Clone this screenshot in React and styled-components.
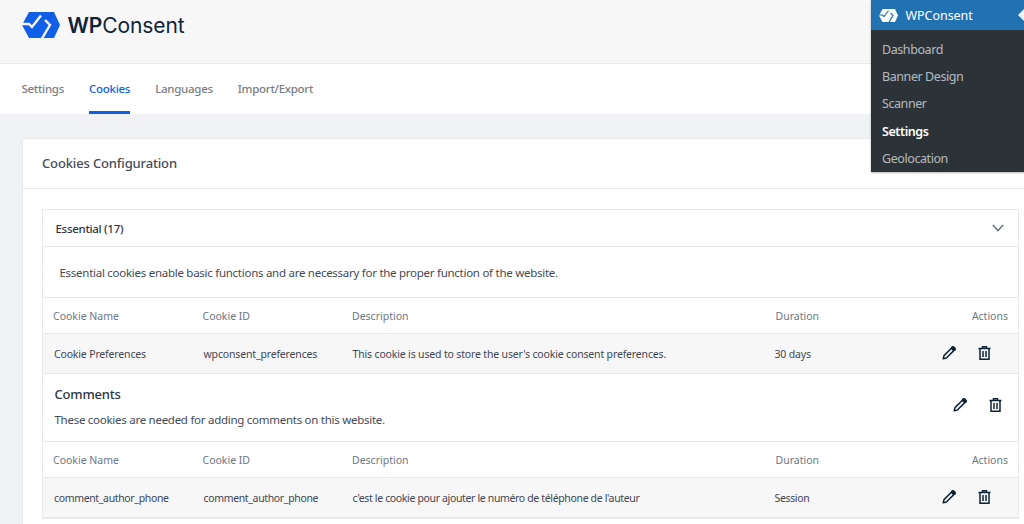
import styled, { createGlobalStyle } from 'styled-components';

const GlobalStyle = createGlobalStyle`
    html, body {
        margin: 0;
        padding: 0;
        background: #f0f2f5;
    }
    body {
        font-family: "Noto Sans", "Open Sans", sans-serif;
        color: #393f4c;
    }
    * {
        box-sizing: border-box;
    }
`;

const sections = [
    {
        rows: [
            ['Cookie Preferences', 'wpconsent_preferences', "This cookie is used to store the user's cookie consent preferences.", '30 days'],
        ],
    },
    {
        title: 'Comments',
        text: 'These cookies are needed for adding comments on this website.',
        tight: true,
        rows: [
            ['comment_author_phone', 'comment_author_phone', "c'est le cookie pour ajouter le numéro de téléphone de l'auteur", 'Session'],
        ],
    },
];

const LogoMark = ({ width = 38, color = '#0f5fe8', cut = '#f7f7f8', seam = '#0b46b4' }) => (
    <svg width={width} height={(width * 26) / 38} viewBox="0 0 38 26">
        <path d="M7 0 H32 L38 13 L32 26 H7 L0 13 Z" fill={color} />
        <g fill="none" stroke={cut} strokeWidth="2.4">
            <path d="M-1 12 H7 L10 15 L19 3.5" />
            <path d="M23 8 L28 13 L19.7 27" />
        </g>
        <path d="M32 0 L25.5 7" fill="none" stroke={seam} strokeWidth="0.7" />
    </svg>
);

const PencilIcon = () => (
    <svg width="14" height="14" viewBox="0 0 14 14" fill="none" stroke="#0f2438" strokeWidth="1.5" strokeLinejoin="round">
        <path d="M1.2 12.8 L2 9.6 L9.6 2 L12 4.4 L4.4 12 Z" />
        <path d="M10 1 L11.2 0.6 L13.4 2.8 L13 4 L11.6 4.4 L9.6 2.4 Z" fill="#0f2438" />
    </svg>
);

const TrashIcon = () => (
    <svg width="13" height="14" viewBox="0 0 13 14" fill="none" stroke="#0f2438" strokeWidth="1.5">
        <path d="M0.5 2.5 H12.5" />
        <path d="M4.5 2.5 V0.8 H8.5 V2.5" />
        <path d="M2 2.5 V13.2 H11 V2.5" />
        <path d="M5 5 V11 M8 5 V11" />
    </svg>
);

const Chevron = () => (
    <svg width="12" height="8" viewBox="0 0 12 8" fill="none" stroke="#6b7280" strokeWidth="1.4">
        <path d="M0.8 1 L6 6.6 L11.2 1" />
    </svg>
);

const Actions = ({ inset }) => (
    <ActionGroup $inset={inset}>
        <PencilIcon />
        <TrashIcon />
    </ActionGroup>
);

const CookieTable = ({ rows, tight }) => (
    <>
        <HeadRow>
            <span>Cookie Name</span>
            <span>Cookie ID</span>
            <span>Description</span>
            <span>Duration</span>
            <ActionsHead>Actions</ActionsHead>
        </HeadRow>
        {rows.map((row) => (
            <BodyRow key={row[0]} $tight={tight}>
                {row.map((cell, i) => (
                    <span key={i}>{cell}</span>
                ))}
                <Actions inset={17} />
            </BodyRow>
        ))}
    </>
);

const App = () => {
    return (
        <Page>
            <GlobalStyle />
            <Header>
                <LogoMark />
                <Brand>
                    <strong>WP</strong>Consent
                </Brand>
            </Header>
            <Tabs>
                <Tab>Settings</Tab>
                <Tab $active>Cookies</Tab>
                <Tab>Languages</Tab>
                <Tab>Import/Export</Tab>
            </Tabs>
            <Card>
                <CardTitle>Cookies Configuration</CardTitle>
                <CardBody>
                    <Accordion>
                        <AccordionHead>
                            <span>Essential (17)</span>
                            <Chevron />
                        </AccordionHead>
                        <Intro>Essential cookies enable basic functions and are necessary for the proper function of the website.</Intro>
                        {sections.map((section) => (
                            <div key={section.rows[0][0]}>
                                {section.title && (
                                    <Category>
                                        <div>
                                            <CategoryTitle>{section.title}</CategoryTitle>
                                            <CategoryText>{section.text}</CategoryText>
                                        </div>
                                        <Actions inset={16} />
                                    </Category>
                                )}
                                <CookieTable rows={section.rows} tight={section.tight} />
                            </div>
                        ))}
                    </Accordion>
                </CardBody>
            </Card>
            <AdminMenu>
                <AdminHead>
                    <LogoMark width={19} color="#fff" cut="#2271b1" seam="#fff" />
                    <span>WPConsent</span>
                    <Notch />
                </AdminHead>
                <AdminList>
                    <AdminItem>Dashboard</AdminItem>
                    <AdminItem>Banner Design</AdminItem>
                    <AdminItem>Scanner</AdminItem>
                    <AdminItem $current>Settings</AdminItem>
                    <AdminItem>Geolocation</AdminItem>
                </AdminList>
            </AdminMenu>
        </Page>
    );
};

const Page = styled.div`
    position: relative;
    width: 1024px;
    height: 524px;
    overflow: hidden;
    background: #f0f2f5;
`;

const Header = styled.header`
    display: flex;
    align-items: center;
    gap: 8px;
    height: 64px;
    padding: 0 0 13px 21.5px;
    background: #f7f7f8;
    border-bottom: 1px solid #e8e9ec;
`;

const Brand = styled.div`
    font-family: "Inter", "Lato", sans-serif;
    font-size: 21px;
    letter-spacing: -0.1px;
    color: #0f2438;
    strong {
        font-weight: 600;
    }
`;

const Tabs = styled.nav`
    display: flex;
    gap: 25px;
    height: 50px;
    padding-left: 21.5px;
    background: #fff;
`;

const Tab = styled.a`
    display: flex;
    align-items: center;
    height: 50px;
    padding-top: 2px;
    font-size: 11.5px;
    font-weight: 500;
    letter-spacing: -0.28px;
    color: ${(props) => (props.$active ? '#0f5fe8' : '#7b7d85')};
    border-bottom: 3px solid ${(props) => (props.$active ? '#0f5fe8' : 'transparent')};
`;

const Card = styled.section`
    margin: 24px -15px 0 22px;
    background: #fff;
    border: 1px solid #e8e9ec;
    border-radius: 3px;
`;

const CardTitle = styled.h2`
    display: flex;
    align-items: center;
    height: 50px;
    margin: 0;
    padding: 0 0 2px 19px;
    font-size: 13px;
    font-weight: 500;
    letter-spacing: -0.15px;
    color: #454b57;
    border-bottom: 1px solid #e8e9ec;
`;

const CardBody = styled.div`
    padding: 20px 19px;
`;

const Accordion = styled.div`
    border: 1px solid #e8e9ec;
`;

const AccordionHead = styled.div`
    display: flex;
    align-items: center;
    justify-content: space-between;
    height: 37px;
    padding: 0 14px 0 12.5px;
    font-size: 11.5px;
    font-weight: 500;
    letter-spacing: -0.3px;
    color: #2f3440;
    border-bottom: 1px solid #e8e9ec;
`;

const Intro = styled.p`
    display: flex;
    align-items: center;
    height: 51px;
    margin: 0;
    padding-left: 16.5px;
    font-size: 11.5px;
    letter-spacing: -0.27px;
    color: #3f4a56;
    border-bottom: 1px solid #e8e9ec;
`;

const HeadRow = styled.div`
    display: grid;
    grid-template-columns: 149.5px 149.5px 423.5px 1fr 130px;
    align-items: center;
    height: 36px;
    padding-left: 10px;
    padding-right: 10px;
    font-size: 10.5px;
    color: #6b7785;
    background: #fff;
    border-bottom: 1px solid #e8e9ec;
`;

const ActionsHead = styled.span`
    text-align: right;
`;

const BodyRow = styled.div`
    display: grid;
    grid-template-columns: 149.5px 149px 422px 1fr 130px;
    align-items: center;
    height: 40px;
    padding-left: 11px;
    padding-right: 10px;
    font-size: 10.5px;
    letter-spacing: ${(props) => (props.$tight ? '-0.35px' : '-0.16px')};
    color: #3f4652;
    background: #f7f7f8;
    border-bottom: 1px solid #e8e9ec;
`;

const ActionGroup = styled.div`
    display: flex;
    align-items: center;
    justify-content: flex-end;
    gap: 22px;
    margin-top: -2px;
    padding-right: ${(props) => props.$inset}px;
`;

const Category = styled.div`
    display: flex;
    align-items: center;
    justify-content: space-between;
    height: 68px;
    padding: 0 0 3px 11.5px;
    border-bottom: 1px solid #e8e9ec;
    background: #fff;
`;

const CategoryTitle = styled.h3`
    margin: 0 0 9px;
    font-size: 13px;
    font-weight: 500;
    letter-spacing: -0.2px;
    line-height: 18px;
    color: #2f3440;
`;

const CategoryText = styled.p`
    margin: 0;
    font-size: 11.5px;
    letter-spacing: -0.27px;
    line-height: 16px;
    color: #3f4a56;
`;

const AdminMenu = styled.aside`
    position: absolute;
    top: 0;
    left: 870.5px;
    width: 154px;
    height: 172px;
    background: #2c3338;
    box-shadow: 0 1px 2px rgba(0, 0, 0, 0.3);
`;

const AdminHead = styled.div`
    position: relative;
    display: flex;
    align-items: center;
    gap: 8px;
    height: 30px;
    padding-left: 8px;
    font-size: 12.5px;
    letter-spacing: -0.05px;
    color: #fff;
    background: #2271b1;
`;

const Notch = styled.i`
    position: absolute;
    top: 8px;
    right: 0;
    border-top: 7px solid transparent;
    border-bottom: 7px solid transparent;
    border-right: 7px solid #f0f2f5;
`;

const AdminList = styled.div`
    display: flex;
    flex-direction: column;
    padding-top: 6px;
`;

const AdminItem = styled.a`
    display: flex;
    align-items: center;
    height: 27.2px;
    padding-left: 11.5px;
    font-size: 12.5px;
    letter-spacing: -0.42px;
    font-weight: ${(props) => (props.$current ? 600 : 400)};
    color: ${(props) => (props.$current ? '#fff' : 'rgba(240, 246, 252, 0.7)')};
`;

export default App;
